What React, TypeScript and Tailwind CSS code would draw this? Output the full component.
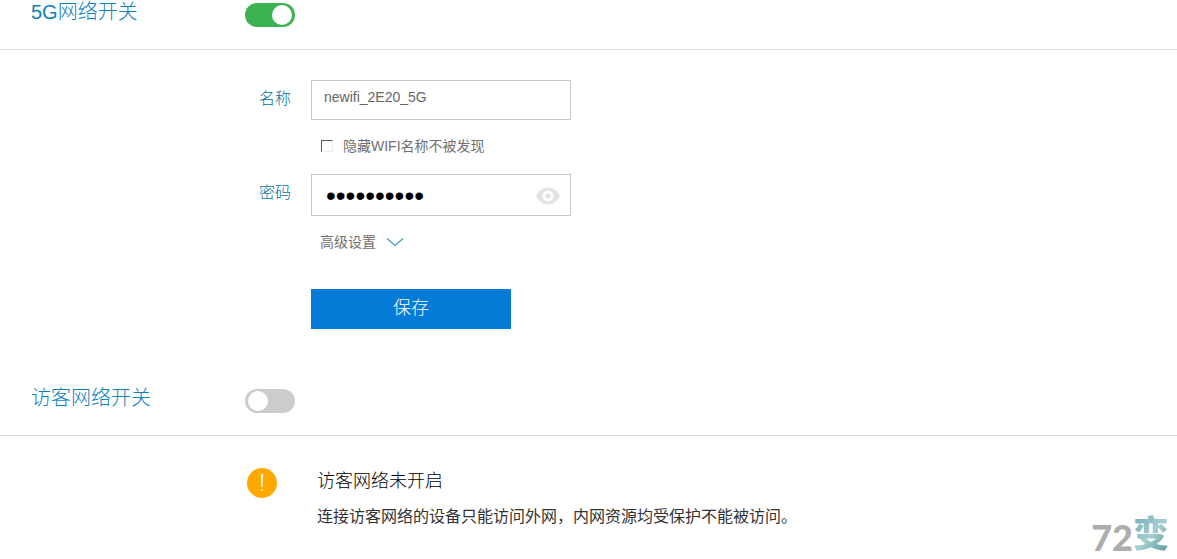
import { useState } from 'react';

interface SwitchHeaderProps {
  id: string;
  title: string;
  checked: boolean;
  onChange: (checked: boolean) => void;
}

function SwitchHeader({ id, title, checked, onChange }: SwitchHeaderProps) {
  return (
    <header className="flex h-[50px] items-start border-b border-[#d9d9d9] pl-[31px]">
      <label htmlFor={id} className="w-[214px] text-xl leading-6 font-light text-[#0f7fc0]">
        {title}
      </label>
      <input
        id={id}
        type="checkbox"
        role="switch"
        checked={checked}
        onChange={(e) => onChange(e.target.checked)}
        className="mt-[3px] h-6 w-[50px] cursor-pointer appearance-none rounded-full bg-[#cccccc] p-[2px] before:ml-px before:block before:size-5 before:rounded-full before:bg-white checked:bg-[#3cb250] checked:before:ml-[25px]"
      />
    </header>
  );
}

function EyeIcon() {
  return (
    <svg width="26" height="18" viewBox="0 0 26 18" aria-hidden="true">
      <path d="M1 9C4 3.4 8 .6 13 .6S22 3.4 25 9c-3 5.6-7 8.4-12 8.4S4 14.6 1 9Z" fill="#e3e3e3" />
      <circle cx="13" cy="9" r="5.4" fill="#fff" />
      <circle cx="13" cy="9" r="2.8" fill="#e3e3e3" />
    </svg>
  );
}

function WifiForm() {
  const [name, setName] = useState('newifi_2E20_5G');
  const [password, setPassword] = useState('newifi2E20');
  const [hidden, setHidden] = useState(false);
  const [visible, setVisible] = useState(false);

  return (
    <form className="pt-[30px] pb-[57px] pl-[259px]" onSubmit={(e) => e.preventDefault()}>
      <div className="flex items-start">
        <label htmlFor="name" className="w-[52px] pt-[7px] text-base leading-6 font-light text-[#006f9c]">
          名称
        </label>
        <input
          id="name"
          value={name}
          onChange={(e) => setName(e.target.value)}
          className="h-10 w-[260px] border border-[#c8c8c8] px-3 pb-[6px] text-sm text-[#666666] outline-none"
        />
      </div>

      <label className="ml-[62px] flex h-[54px] items-center gap-[10px] pb-[2px] text-sm text-[#707070]">
        <input
          type="checkbox"
          checked={hidden}
          onChange={(e) => setHidden(e.target.checked)}
          className="size-3 appearance-none border border-t-[#555555] border-r-[#f0eee6] border-b-[#f0eee6] border-l-[#555555] checked:bg-[#0f7fc0]"
        />
        隐藏WIFI名称不被发现
      </label>

      <div className="flex items-start">
        <label htmlFor="password" className="w-[52px] pt-[7px] text-base leading-6 font-light text-[#006f9c]">
          密码
        </label>
        <div className="flex h-[42px] w-[260px] items-center border border-[#c8c8c8] pt-px pr-[9px] pl-[14px]">
          <input
            id="password"
            type={visible ? 'text' : 'password'}
            value={password}
            onChange={(e) => setPassword(e.target.value)}
            className="min-w-0 flex-1 text-[28px] leading-8 text-black outline-none"
          />
          <button type="button" aria-label="显示密码" onClick={() => setVisible(!visible)}>
            <EyeIcon />
          </button>
        </div>
      </div>

      <button type="button" className="mt-4 ml-[61px] flex h-5 items-center gap-[10px] text-sm text-[#707070]">
        高级设置
        <svg width="18" height="10" viewBox="0 0 18 10" fill="none" stroke="#3f97b5" strokeWidth="1.2" aria-hidden="true">
          <path d="M1 1.5l8 7L17 1.5" />
        </svg>
      </button>

      <button type="submit" className="mt-[37px] ml-[52px] block h-10 w-[200px] bg-[#047bd6] pb-[2px] text-lg leading-6 font-light text-white">
        保存
      </button>
    </form>
  );
}

function GuestNotice() {
  return (
    <div className="flex items-start gap-10 pt-8 pl-[247px] text-[#333333]">
      <span className="flex size-[30px] shrink-0 items-center justify-center rounded-full bg-[#ffa800]">
        <svg width="4" height="20" viewBox="0 0 4 20" fill="#fff" aria-hidden="true">
          <path d="M1 1h2l-.4 13H1.4z" />
          <circle cx="2" cy="17" r="1" />
        </svg>
      </span>
      <div className="pt-px">
        <h2 className="text-lg leading-6 font-light text-black">访客网络未开启</h2>
        <p className="mt-3 text-base leading-6">连接访客网络的设备只能访问外网，内网资源均受保护不能被访问。</p>
      </div>
    </div>
  );
}

function Watermark() {
  return (
    <div className="absolute right-2 bottom-1 flex items-end leading-none font-black">
      <span className="font-['Lato'] text-4xl leading-9 text-[#adadad]">72</span>
      <span className="bg-linear-to-br from-[#74aab8] via-[#a5cfd0] to-[#4a9298] bg-clip-text text-4xl leading-10 text-transparent">变</span>
    </div>
  );
}

export default function App() {
  const [wifi, setWifi] = useState(true);
  const [guest, setGuest] = useState(false);

  return (
    <main className="relative min-h-screen overflow-hidden bg-white font-['Liberation_Sans','Noto_Sans_CJK_SC',sans-serif]">
      <section>
        <SwitchHeader id="wifi" title="5G网络开关" checked={wifi} onChange={setWifi} />
        <WifiForm />
      </section>
      <section>
        <SwitchHeader id="guest" title="访客网络开关" checked={guest} onChange={setGuest} />
        <GuestNotice />
      </section>
      <Watermark />
    </main>
  );
}
